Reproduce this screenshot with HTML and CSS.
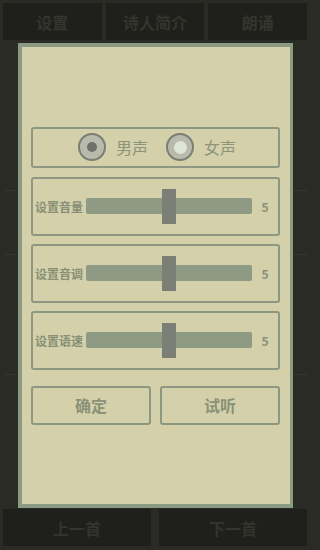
FILE: index.html
```html
<!DOCTYPE html>
<html lang="zh">
<head>
<meta charset="utf-8">
<title>朗诵设置</title>
<link rel="stylesheet" href="styles.css">
</head>
<body>
<div class="page">
  <div class="topbar">
    <div class="tab">设置</div>
    <div class="tab">诗人简介</div>
    <div class="tab">朗诵</div>
  </div>
  <div class="main">
    <div class="row r1"></div>
    <div class="row r2"></div>
    <div class="row r3"></div>
    <div class="row r4"></div>
  </div>
  <div class="bottombar">
    <div class="tab">上一首</div>
    <div class="tab">下一首</div>
  </div>

  <div class="dialog">
    <div class="box radios">
      <div class="radio">
        <span class="circle checked"><span class="dot"></span></span>
        <span class="rlabel">男声</span>
      </div>
      <div class="radio">
        <span class="circle"><span class="dot"></span></span>
        <span class="rlabel">女声</span>
      </div>
    </div>
    <div class="box slider-row">
      <span class="slabel">设置音量</span>
      <div class="track"><span class="thumb"></span></div>
      <span class="value">5</span>
    </div>
    <div class="box slider-row">
      <span class="slabel">设置音调</span>
      <div class="track"><span class="thumb"></span></div>
      <span class="value">5</span>
    </div>
    <div class="box slider-row">
      <span class="slabel">设置语速</span>
      <div class="track"><span class="thumb"></span></div>
      <span class="value">5</span>
    </div>
    <div class="buttons">
      <div class="box btn">确定</div>
      <div class="box btn">试听</div>
    </div>
  </div>
</div>
</body>
</html>
```

FILE: styles.css
```css
* { box-sizing: border-box; }
html, body {
  margin: 0;
  padding: 0;
  background: #2a2b24;
}
body {
  font-family: "Noto Sans CJK SC", "Noto Sans", sans-serif;
}
.page {
  position: relative;
  width: 311px;
  height: 550px;
  display: flex;
  flex-direction: column;
  overflow: hidden;
}
.topbar {
  height: 40px;
  padding: 3px 4px 0 3px;
  display: flex;
  gap: 4px;
}
.topbar .tab {
  flex: 1;
  background: #1f201b;
  color: #34352e;
  font-size: 16px;
  font-weight: bold;
  display: flex;
  align-items: center;
  justify-content: center;
}
.main {
  flex: 1;
  display: flex;
  flex-direction: column;
  padding: 0 3px;
}
.row {
  border-bottom: 1px solid #34352d;
}
.r1 { height: 151px; }
.r2 { height: 64px; }
.r3 { height: 120px; }
.r4 { flex: 1; border-bottom: none; }
.bottombar {
  height: 41px;
  padding: 0 4px 4px 3px;
  display: flex;
  gap: 8px;
}
.bottombar .tab {
  flex: 1;
  background: #1f201b;
  color: #33342d;
  font-size: 16px;
  font-weight: bold;
  display: flex;
  align-items: center;
  justify-content: center;
}
.dialog {
  position: absolute;
  left: 18px;
  top: 43px;
  width: 275px;
  height: 465px;
  background: #d4d0a9;
  border-style: solid;
  border-color: #8b9a82;
  border-width: 4px 3px 4px 4px;
  padding: 0 10px 0 9px;
  display: flex;
  flex-direction: column;
  justify-content: center;
}
.box {
  border: 2px solid #8d9781;
  border-radius: 3px;
}
.radios {
  height: 41px;
  display: flex;
  align-items: center;
  justify-content: center;
  gap: 18px;
  padding-left: 3px;
}
.radio {
  display: flex;
  align-items: center;
  gap: 10px;
}
.circle {
  width: 28px;
  height: 28px;
  border-radius: 50%;
  border: 2px solid #7b7e73;
  background: #b8bbac;
  display: flex;
  align-items: center;
  justify-content: center;
}
.circle .dot {
  width: 13px;
  height: 13px;
  border-radius: 50%;
  background: #dfe5d6;
}
.circle.checked .dot {
  width: 10px;
  height: 10px;
  background: #6e7169;
}
.rlabel {
  font-size: 16px;
  color: #8c947b;
  line-height: 1;
}
.slider-row {
  height: 59px;
  margin-top: 9px;
  display: flex;
  align-items: center;
  padding: 0 0 0 2px;
}
.slider-row + .slider-row { margin-top: 8px; }
.slider-row:last-of-type { margin-top: 9px; }
.slabel {
  width: 51px;
  font-size: 12px;
  font-weight: bold;
  color: #878f77;
  white-space: nowrap;
}
.track {
  position: relative;
  width: 166px;
  height: 16px;
  background: #8e9a83;
  border-radius: 2px;
  display: flex;
  align-items: center;
  justify-content: center;
}
.thumb {
  width: 14px;
  height: 35px;
  background: #7b7f76;
  flex: none;
}
.value {
  flex: 1;
  text-align: center;
  font-size: 12px;
  font-weight: bold;
  color: #878f77;
}
.buttons {
  margin-top: 16px;
  display: flex;
  gap: 9px;
}
.btn {
  flex: 1;
  height: 39px;
  display: flex;
  align-items: center;
  justify-content: center;
  font-size: 16px;
  font-weight: bold;
  color: #8a9279;
}
```
